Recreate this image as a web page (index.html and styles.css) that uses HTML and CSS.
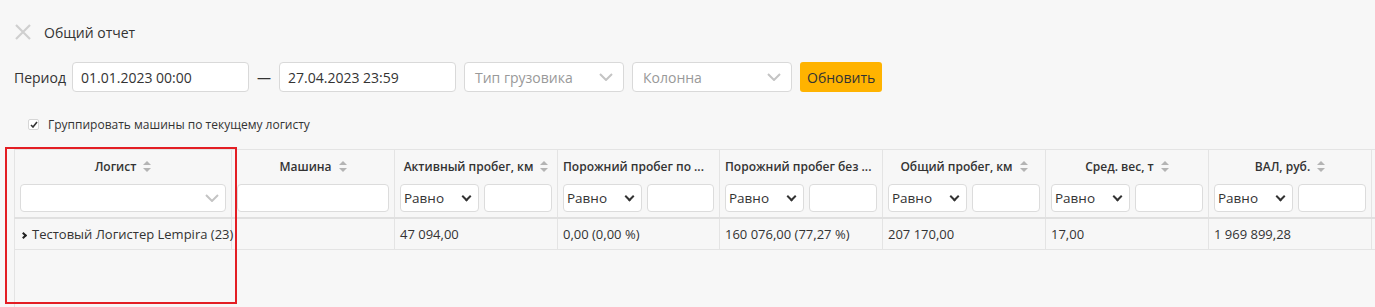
FILE: index.html
```html
<!DOCTYPE html>
<html lang="ru">
<head>
  <meta charset="UTF-8" />
  <meta name="viewport" content="width=device-width, initial-scale=1" />
  <title>Общий отчет</title>
  <link rel="stylesheet" href="styles.css">
</head>
<body>
  <div class="report">
    <div class="report-head">
      <span class="close-btn">
        <svg width="16" height="16" viewBox="0 0 16 16"><path d="M1 1 L15 15 M15 1 L1 15" stroke="#cfcfcf" stroke-width="2.2" fill="none"/></svg>
      </span>
      <span class="report-title">Общий отчет</span>
    </div>

    <div class="filters">
      <span class="filters-label">Период</span>
      <div class="field date">01.01.2023 00:00</div>
      <span class="dash">—</span>
      <div class="field date">27.04.2023 23:59</div>
      <div class="field select placeholder">Тип грузовика
        <svg class="chev" width="14" height="8" viewBox="0 0 14 8"><path d="M1 1 L7 7 L13 1" stroke="#c4c4c4" stroke-width="2" fill="none"/></svg>
      </div>
      <div class="field select placeholder">Колонна
        <svg class="chev" width="14" height="8" viewBox="0 0 14 8"><path d="M1 1 L7 7 L13 1" stroke="#c4c4c4" stroke-width="2" fill="none"/></svg>
      </div>
      <button class="btn-refresh">Обновить</button>
    </div>

    <label class="group-check">
      <span class="box">
        <svg width="8" height="7" viewBox="0 0 8 7"><path d="M1 4 L3 6 L7 1" stroke="#333" stroke-width="1.6" fill="none"/></svg>
      </span>
      Группировать машины по текущему логисту
    </label>

    <div class="grid-wrap">
      <table class="grid">
        <colgroup>
          <col style="width:217px">
          <col style="width:163px">
          <col style="width:163px">
          <col style="width:162px">
          <col style="width:163px">
          <col style="width:163px">
          <col style="width:163px">
          <col style="width:163px">
          <col style="width:100px">
        </colgroup>
        <thead>
          <tr>
            <th>
              <div class="th-title">Логист <svg class="sort" width="8" height="11" viewBox="0 0 8 11"><path d="M4 0 L8 4 L0 4 Z M0 7 L8 7 L4 11 Z" fill="#b4b4b4"/></svg></div>
              <div class="th-filter">
                <div class="cell-select">
                  <svg class="chev" width="14" height="8" viewBox="0 0 14 8"><path d="M1 1 L7 7 L13 1" stroke="#c4c4c4" stroke-width="2" fill="none"/></svg>
                </div>
              </div>
            </th>
            <th>
              <div class="th-title">Машина <svg class="sort" width="8" height="11" viewBox="0 0 8 11"><path d="M4 0 L8 4 L0 4 Z M0 7 L8 7 L4 11 Z" fill="#b4b4b4"/></svg></div>
              <div class="th-filter"><div class="cell-input wide"></div></div>
            </th>
            <th>
              <div class="th-title">Активный пробег, км <svg class="sort" width="8" height="11" viewBox="0 0 8 11"><path d="M4 0 L8 4 L0 4 Z M0 7 L8 7 L4 11 Z" fill="#b4b4b4"/></svg></div>
              <div class="th-filter"><div class="op">Равно<i class="op-chev"></i></div><div class="cell-input"></div></div>
            </th>
            <th>
              <div class="th-title trunc">Порожний пробег по ...</div>
              <div class="th-filter"><div class="op">Равно<i class="op-chev"></i></div><div class="cell-input"></div></div>
            </th>
            <th>
              <div class="th-title trunc">Порожний пробег без ...</div>
              <div class="th-filter"><div class="op">Равно<i class="op-chev"></i></div><div class="cell-input"></div></div>
            </th>
            <th>
              <div class="th-title">Общий пробег, км <svg class="sort" width="8" height="11" viewBox="0 0 8 11"><path d="M4 0 L8 4 L0 4 Z M0 7 L8 7 L4 11 Z" fill="#b4b4b4"/></svg></div>
              <div class="th-filter"><div class="op">Равно<i class="op-chev"></i></div><div class="cell-input"></div></div>
            </th>
            <th>
              <div class="th-title">Сред. вес, т <svg class="sort" width="8" height="11" viewBox="0 0 8 11"><path d="M4 0 L8 4 L0 4 Z M0 7 L8 7 L4 11 Z" fill="#b4b4b4"/></svg></div>
              <div class="th-filter"><div class="op">Равно<i class="op-chev"></i></div><div class="cell-input"></div></div>
            </th>
            <th>
              <div class="th-title">ВАЛ, руб. <svg class="sort" width="8" height="11" viewBox="0 0 8 11"><path d="M4 0 L8 4 L0 4 Z M0 7 L8 7 L4 11 Z" fill="#b4b4b4"/></svg></div>
              <div class="th-filter"><div class="op">Равно<i class="op-chev"></i></div><div class="cell-input"></div></div>
            </th>
            <th></th>
          </tr>
        </thead>
        <tbody>
          <tr>
            <td class="group"><i class="expand"></i>Тестовый Логистер Lempira (23)</td>
            <td></td>
            <td>47 094,00</td>
            <td>0,00 (0,00 %)</td>
            <td>160 076,00 (77,27 %)</td>
            <td>207 170,00</td>
            <td>17,00</td>
            <td>1 969 899,28</td>
            <td></td>
          </tr>
        </tbody>
      </table>
      <div class="grid-empty"></div>
      <div class="highlight"></div>
    </div>
  </div>
</body>
</html>
```

FILE: styles.css
```css
* { box-sizing: border-box; }
body {
  margin: 0;
  background: #f7f7f7;
  color: #333;
  font-family: 'Open Sans', 'Liberation Sans', sans-serif;
  font-size: 14px;
  overflow: hidden;
}
.report {
  padding: 0 0 0 14px;
}
.report-head {
  display: flex;
  align-items: center;
  height: 24px;
  margin-top: 20px;
}
.close-btn {
  display: flex;
  width: 16px;
  height: 16px;
  margin-left: 1px;
  margin-right: 13px;
}
.report-title {
  font-size: 14px;
  color: #333;
}
.filters {
  display: flex;
  align-items: center;
  margin-top: 18px;
  height: 30px;
}
.filters-label {
  margin-right: 6px;
}
.field {
  height: 30px;
  border: 1px solid #d9d9d9;
  border-radius: 4px;
  background: #fff;
  padding: 0 8px;
  display: flex;
  align-items: center;
}
.field.date { width: 177px; }
.dash {
  width: 30px;
  text-align: center;
}
.field.select {
  width: 160px;
  margin-left: 8px;
  justify-content: space-between;
  padding: 0 10px;
}
.field.placeholder { color: #999; }
.btn-refresh {
  margin-left: 8px;
  height: 30px;
  padding: 0 7px;
  background: #ffb300;
  border: none;
  border-radius: 3px;
  color: #333;
  font-family: inherit;
  font-size: 14px;
}
.group-check {
  display: flex;
  align-items: center;
  margin-top: 22px;
  margin-left: 14px;
  height: 20px;
  font-size: 12px;
}
.box {
  width: 11px;
  height: 11px;
  border: 1px solid #d6d6d6;
  background: #fff;
  border-radius: 2px;
  display: flex;
  align-items: center;
  justify-content: center;
  margin-right: 9px;
}
.grid-wrap {
  position: relative;
  margin-top: 15px;
}
.grid {
  border-collapse: collapse;
  table-layout: fixed;
  width: 1457px;
}
.grid th, .grid td {
  border-left: 1px solid #e4e4e4;
  border-right: 1px solid #e4e4e4;
}
.grid th {
  border-top: 1px solid #e4e4e4;
  border-bottom: 2px solid #e0e0e0;
  padding: 0 5px 5px;
  vertical-align: top;
  font-weight: 600;
  font-size: 12px;
}
.th-title {
  height: 32px;
  margin-bottom: 2px;
  display: flex;
  align-items: center;
  justify-content: center;
  white-space: nowrap;
  color: #333;
}
.th-title.trunc { justify-content: flex-start; }
.sort {
  margin-left: 7px;
}
.th-filter {
  display: flex;
  gap: 5px;
  height: 28px;
}
.cell-select, .cell-input, .op {
  height: 28px;
  border: 1px solid #dcdcdc;
  border-radius: 4px;
  background: #fff;
}
.cell-select {
  width: 100%;
  display: flex;
  align-items: center;
  justify-content: flex-end;
  padding-right: 6px;
}
.cell-input { flex: 1; }
.op {
  width: 79px;
  display: flex;
  align-items: center;
  justify-content: space-between;
  padding: 0 8px 0 3px;
  font-weight: 400;
  font-size: 13.5px;
}
.op-chev {
  width: 7px;
  height: 7px;
  border-right: 2px solid #333;
  border-bottom: 2px solid #333;
  transform: rotate(45deg);
  margin-top: -4px;
}
.grid td {
  height: 31px;
  border-bottom: 1px solid #e4e4e4;
  padding: 0 5px;
  font-size: 13px;
  white-space: nowrap;
}
.grid td.group { padding-left: 6px; }
.expand {
  display: inline-block;
  width: 5px;
  height: 5px;
  border-right: 2px solid #222;
  border-bottom: 2px solid #222;
  transform: rotate(-45deg);
  margin-right: 6px;
  margin-bottom: 1px;
}
.grid-empty {
  height: 60px;
  border-left: 1px solid #e4e4e4;
}
.highlight {
  position: absolute;
  left: -9px;
  top: -2px;
  width: 232px;
  height: 157px;
  border: 2px solid #e31e24;
}
```
